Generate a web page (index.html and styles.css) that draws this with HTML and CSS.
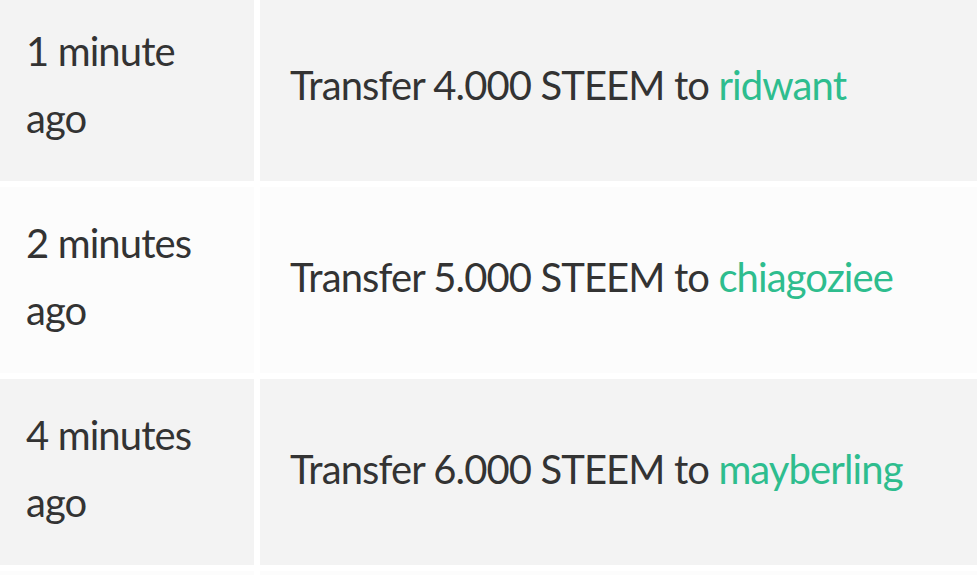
FILE: index.html
```html
<!DOCTYPE html>
<html lang="en">
<head>
    <meta charset="UTF-8">
    <meta name="viewport" content="width=device-width, initial-scale=1.0">
    <title>Wallet History</title>
    <link rel="stylesheet" href="styles.css">
</head>
<body>

    <div class="history">
        <div class="row">
            <div class="cell time"><span>1 minute ago</span></div>
            <div class="cell memo"><span>Transfer 4.000 STEEM to <a href="#">ridwant</a></span></div>
        </div>
        <div class="row">
            <div class="cell time"><span>2 minutes ago</span></div>
            <div class="cell memo"><span>Transfer 5.000 STEEM to <a href="#">chiagoziee</a></span></div>
        </div>
        <div class="row">
            <div class="cell time"><span>4 minutes ago</span></div>
            <div class="cell memo"><span>Transfer 6.000 STEEM to <a href="#">mayberling</a></span></div>
        </div>
        <div class="row">
            <div class="cell time"></div>
            <div class="cell memo"></div>
        </div>
    </div>

</body>
</html>
```

FILE: styles.css
```css
body {
    font-family: Lato, "Open Sans", sans-serif;
    background: #fff;
    color: #333;
    margin: 0;
    height: 575px;
    overflow: hidden;
}
.history {
    display: flex;
    flex-direction: column;
    gap: 6px;
    margin-top: -5px;
}
.row {
    display: grid;
    grid-template-columns: 254px 1fr;
    gap: 6px;
    height: 186px;
}
.row:nth-child(odd) .cell {
    background: #f3f3f3;
}
.row:nth-child(even) .cell {
    background: #fcfcfc;
}
.cell {
    display: flex;
    align-items: center;
    padding-bottom: 6px;
    font-size: 40px;
    line-height: 67px;
    letter-spacing: -0.9px;
}
.time {
    padding-left: 26px;
    padding-right: 26px;
}
.memo {
    padding-left: 30px;
    padding-right: 30px;
}
.memo a {
    color: #2ebd8e;
    text-decoration: none;
}
```
